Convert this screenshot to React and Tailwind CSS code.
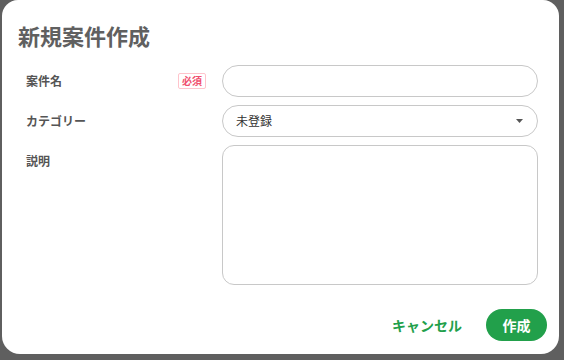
import React, { useState } from 'react';

const font = { fontFamily: '"Noto Sans CJK JP", "Noto Sans", sans-serif' };

const Label = ({ children, required }) => (
    <div className="flex h-8 items-center justify-between pl-[24px] pr-[16px]">
        <span className="text-[12px] font-bold text-[#555]">{children}</span>
        {required && (
            <span className="flex h-[16px] items-center rounded-[2px] border border-[#ffc4cc] px-[3px] text-[10px] font-bold leading-none text-[#f0506e]">
                必須
            </span>
        )}
    </div>
);

const App = () => {
    const [name, setName] = useState('');
    const [desc, setDesc] = useState('');

    return (
        <div className="h-[360px] w-[564px] bg-[#5f5f5f] pl-[2px]" style={font}>
            <div className="flex h-[354px] w-[557px] flex-col rounded-b-[18px] rounded-t-[16px] bg-white">
                <h1 className="pl-[16px] pt-[19px] text-[22px] font-bold leading-[32px] text-[#606060]">
                    新規案件作成
                </h1>

                <div className="mt-[14px] grid grid-cols-[220px_316px] gap-y-2">
                    <Label required>案件名</Label>
                    <input
                        value={name}
                        onChange={(e) => setName(e.target.value)}
                        className="h-8 rounded-full border border-[#c8c8c8] px-3 text-[12px] outline-none"
                    />

                    <Label>カテゴリー</Label>
                    <div className="flex h-8 items-center justify-between rounded-full border border-[#c8c8c8] pl-[13px] pr-[14px]">
                        <span className="text-[12px] text-[#333]">未登録</span>
                        <svg width="7" height="4" viewBox="0 0 7 4">
                            <path d="M0 0h7L3.5 4z" fill="#555" />
                        </svg>
                    </div>

                    <Label>説明</Label>
                    <textarea
                        value={desc}
                        onChange={(e) => setDesc(e.target.value)}
                        className="h-[140px] resize-none rounded-[12px] border border-[#c8c8c8] p-3 text-[12px] outline-none"
                    />
                </div>

                <div className="mt-[24px] flex items-center justify-end gap-[24px] pr-[12px]">
                    <button className="text-[14px] font-bold text-[#22a04b]">キャンセル</button>
                    <button className="h-8 w-[61px] rounded-full bg-[#22a04b] text-[14px] font-bold text-white">
                        作成
                    </button>
                </div>
            </div>
        </div>
    );
};

export default App;
